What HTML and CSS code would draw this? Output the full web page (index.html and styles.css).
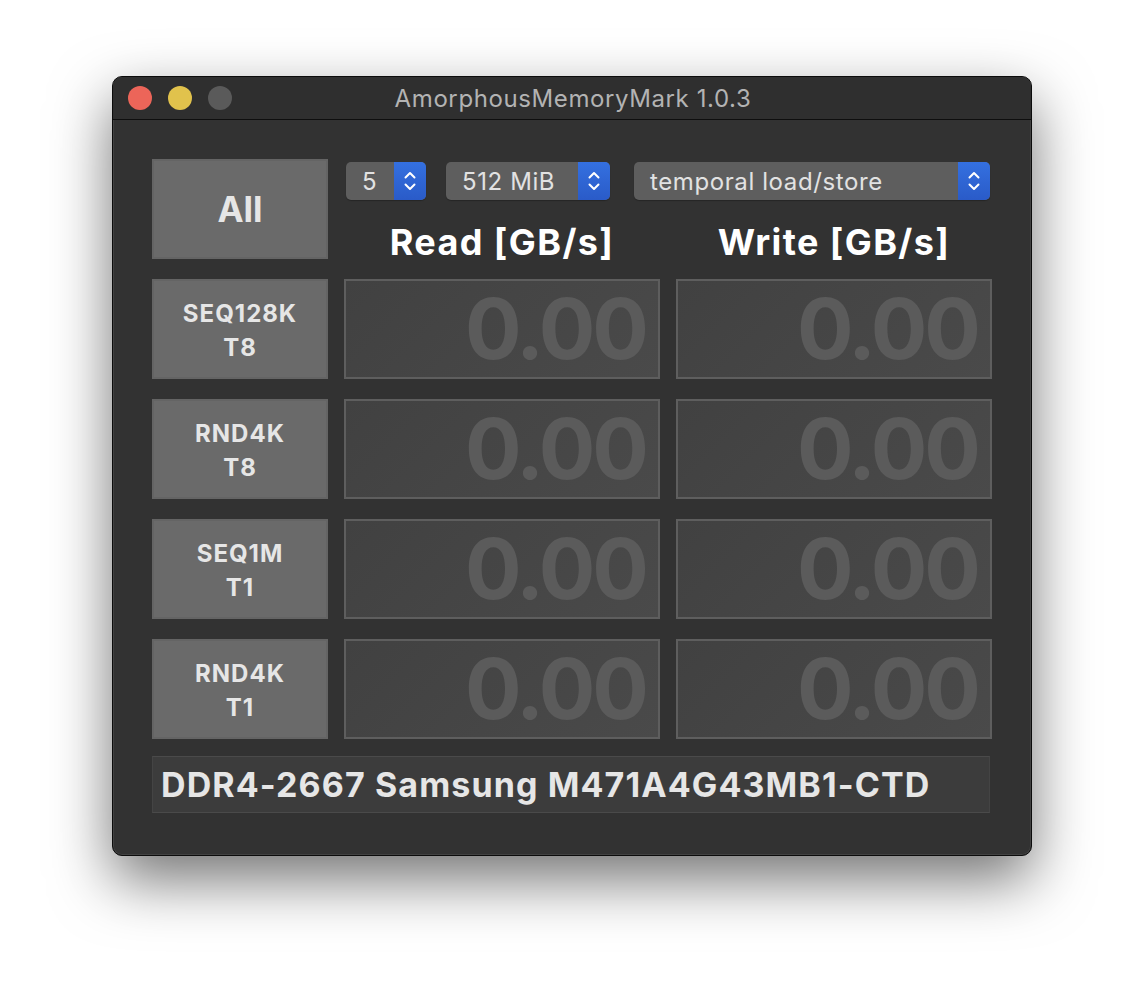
FILE: index.html
```html
<!DOCTYPE html>
<html lang="en">
<head>
    <meta charset="UTF-8">
    <meta name="viewport" content="width=device-width, initial-scale=1.0">
    <title>AmorphousMemoryMark 1.0.3</title>
    <link rel="stylesheet" href="styles.css">
</head>
<body>
    <div class="window">
        <!-- Title bar -->
        <div class="titlebar">
            <div class="lights">
                <span class="light red"></span>
                <span class="light yellow"></span>
                <span class="light grey"></span>
            </div>
            <div class="title">AmorphousMemoryMark 1.0.3</div>
        </div>

        <div class="content">
            <div class="bench">
                <div class="btn all-btn">All</div>

                <div class="top-controls">
                    <div class="popups">
                        <div class="popup popup-count">
                            <span class="popup-text">5</span>
                            <span class="stepper">
                                <svg width="16" height="26" viewBox="0 0 16 26"><path d="M3.5 9.5 L8 5 L12.5 9.5 M3.5 16.5 L8 21 L12.5 16.5" fill="none" stroke="#fff" stroke-width="2" stroke-linecap="round" stroke-linejoin="round"/></svg>
                            </span>
                        </div>
                        <div class="popup popup-size">
                            <span class="popup-text">512 MiB</span>
                            <span class="stepper">
                                <svg width="16" height="26" viewBox="0 0 16 26"><path d="M3.5 9.5 L8 5 L12.5 9.5 M3.5 16.5 L8 21 L12.5 16.5" fill="none" stroke="#fff" stroke-width="2" stroke-linecap="round" stroke-linejoin="round"/></svg>
                            </span>
                        </div>
                        <div class="popup popup-mode">
                            <span class="popup-text">temporal load/store</span>
                            <span class="stepper">
                                <svg width="16" height="26" viewBox="0 0 16 26"><path d="M3.5 9.5 L8 5 L12.5 9.5 M3.5 16.5 L8 21 L12.5 16.5" fill="none" stroke="#fff" stroke-width="2" stroke-linecap="round" stroke-linejoin="round"/></svg>
                            </span>
                        </div>
                    </div>
                    <div class="headers">
                        <div class="col-head">Read [GB/s]</div>
                        <div class="col-head">Write [GB/s]</div>
                    </div>
                </div>

                <div class="btn row-btn">SEQ128K<br>T8</div>
                <div class="value">0.00</div>
                <div class="value">0.00</div>

                <div class="btn row-btn">RND4K<br>T8</div>
                <div class="value">0.00</div>
                <div class="value">0.00</div>

                <div class="btn row-btn">SEQ1M<br>T1</div>
                <div class="value">0.00</div>
                <div class="value">0.00</div>

                <div class="btn row-btn">RND4K<br>T1</div>
                <div class="value">0.00</div>
                <div class="value">0.00</div>
            </div>

            <div class="memory-field">DDR4-2667 Samsung M471A4G43MB1-CTD</div>
        </div>
    </div>
</body>
</html>
```

FILE: styles.css
```css
:root {
    --window-bg: #323232;
    --button-bg: #6a6a6a;
    --popup-bg: #5e5e5e;
    --blue-top: #3470e0;
    --blue-bottom: #2a5bc8;
    --text-light: #e6e6e6;
    --value-text: #5b5b5b;
}

html, body {
    min-height: 100%;
}

body {
    margin: 0;
    padding: 76px 0 150px 112px;
    background: #fff;
    font-family: 'Inter', 'Liberation Sans', sans-serif;
}

.window {
    width: 918px;
    height: 778px;
    background: var(--window-bg);
    border: 1px solid #0c0c0c;
    border-radius: 10px;
    box-shadow: inset 0 0 0 1px rgba(255,255,255,0.08), 0 24px 60px rgba(0,0,0,0.55);
    overflow: hidden;
}

/* Title bar */
.titlebar {
    position: relative;
    height: 42px;
    background: #2f2f2f;
    border-bottom: 1px solid #0e0e0e;
    display: flex;
    align-items: center;
    justify-content: center;
}

.lights {
    position: absolute;
    left: 15px;
    top: 9px;
    display: flex;
    gap: 16px;
}

.light {
    width: 24px;
    height: 24px;
    border-radius: 50%;
}

.light.red { background: #ec6559; }
.light.yellow { background: #e1c24c; }
.light.grey { background: #5a5a5a; }

.title {
    font-size: 24px;
    color: #b3b3b3;
    letter-spacing: 0.6px;
    margin-left: 2px;
}

/* Content */
.content {
    padding: 39px 39px 0;
}

.bench {
    display: grid;
    grid-template-columns: 176px 316px 316px;
    grid-auto-rows: 100px;
    column-gap: 16px;
    row-gap: 20px;
}

.btn {
    background: var(--button-bg);
    border: 2px solid #646464;
    box-sizing: border-box;
    color: var(--text-light);
    font-weight: 700;
    display: flex;
    align-items: center;
    justify-content: center;
    text-align: center;
}

.all-btn {
    font-size: 35px;
}

.row-btn {
    font-size: 24px;
    line-height: 34px;
    letter-spacing: 1px;
    padding-top: 4px;
}

.top-controls {
    grid-column: 2 / 4;
    display: flex;
    flex-direction: column;
}

.popups {
    display: flex;
    margin-top: 3px;
    margin-left: 2px;
}

.popup {
    height: 38px;
    display: flex;
    background: var(--popup-bg);
    border-radius: 5px;
    overflow: hidden;
    box-shadow: 0 1px 1px rgba(0,0,0,0.25);
}

.popup-count { width: 80px; }
.popup-size { width: 164px; margin-left: 20px; }
.popup-mode { width: 356px; margin-left: 24px; }

.popup-text {
    flex: 1;
    padding: 2px 0 0 16px;
    font-size: 24px;
    letter-spacing: 0.6px;
    line-height: 36px;
    color: #e2e2e2;
}

.stepper {
    width: 32px;
    background: linear-gradient(var(--blue-top), var(--blue-bottom));
    display: flex;
    align-items: center;
    justify-content: center;
}

.headers {
    display: grid;
    grid-template-columns: 316px 316px;
    column-gap: 16px;
    margin-top: 20px;
}

.col-head {
    text-align: center;
    font-size: 36px;
    font-weight: 700;
    letter-spacing: 1.4px;
    color: #fff;
}

.value {
    background: linear-gradient(135deg, #414141, #4a4a4a);
    border: 2px solid #5e5e5e;
    box-sizing: border-box;
    color: var(--value-text);
    font-size: 84px;
    font-weight: 700;
    text-align: right;
    padding-right: 12px;
    line-height: 96px;
    letter-spacing: -3px;
}

.memory-field {
    width: 838px;
    height: 57px;
    margin-top: 17px;
    box-sizing: border-box;
    background: #3c3c3c;
    border-top: 1px solid #4a4a4a;
    border-bottom: 1px solid #4a4a4a;
    border-left: 1px solid #444;
    border-right: 1px solid #444;
    padding-left: 8px;
    font-size: 34px;
    font-weight: 700;
    letter-spacing: 1.1px;
    line-height: 55px;
    color: var(--text-light);
}
```
